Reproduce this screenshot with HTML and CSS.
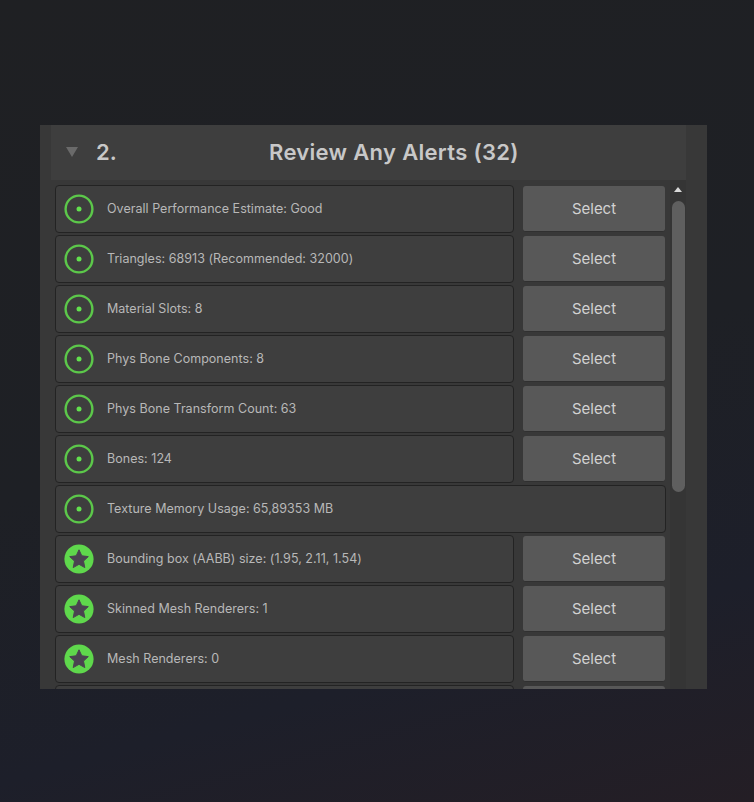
FILE: index.html
```html
<!DOCTYPE html>
<html lang="en">
<head>
  <meta charset="UTF-8" />
  <title>Review Any Alerts</title>
  <link rel="stylesheet" href="styles.css">
</head>
<body>
  <svg class="defs" width="0" height="0">
    <symbol id="icon-good" viewBox="0 0 30 30">
      <circle cx="15" cy="15" r="13.4" fill="none" stroke="#5cc84a" stroke-width="2.4"/>
      <circle cx="15" cy="15" r="2.5" fill="#62e24e"/>
    </symbol>
    <symbol id="icon-star" viewBox="0 0 30 30">
      <circle cx="15" cy="15" r="14.6" fill="#5fd84c"/>
      <path d="M15 5.8l2.8 6 6.5.8-4.8 4.5 1.3 6.5-5.8-3.3-5.8 3.3 1.3-6.5-4.8-4.5 6.5-.8z" fill="#4a4450" stroke="#4a4450" stroke-width="1" stroke-linejoin="round"/>
    </symbol>
  </svg>

  <section class="panel">
    <div class="header">
      <span class="arrow"></span>
      <span class="num">2.</span>
      <h1>Review Any Alerts (32)</h1>
    </div>
    <div class="body">
      <div class="list">
        <div class="row">
          <div class="info"><svg class="icon"><use href="#icon-good"/></svg><span>Overall Performance Estimate: Good</span></div>
          <button class="select-btn">Select</button>
        </div>
        <div class="row">
          <div class="info"><svg class="icon"><use href="#icon-good"/></svg><span>Triangles: 68913 (Recommended: 32000)</span></div>
          <button class="select-btn">Select</button>
        </div>
        <div class="row">
          <div class="info"><svg class="icon"><use href="#icon-good"/></svg><span>Material Slots: 8</span></div>
          <button class="select-btn">Select</button>
        </div>
        <div class="row">
          <div class="info"><svg class="icon"><use href="#icon-good"/></svg><span>Phys Bone Components: 8</span></div>
          <button class="select-btn">Select</button>
        </div>
        <div class="row">
          <div class="info"><svg class="icon"><use href="#icon-good"/></svg><span>Phys Bone Transform Count: 63</span></div>
          <button class="select-btn">Select</button>
        </div>
        <div class="row">
          <div class="info"><svg class="icon"><use href="#icon-good"/></svg><span>Bones: 124</span></div>
          <button class="select-btn">Select</button>
        </div>
        <div class="row">
          <div class="info"><svg class="icon"><use href="#icon-good"/></svg><span>Texture Memory Usage: 65,89353 MB</span></div>
        </div>
        <div class="row">
          <div class="info"><svg class="icon"><use href="#icon-star"/></svg><span>Bounding box (AABB) size: (1.95, 2.11, 1.54)</span></div>
          <button class="select-btn">Select</button>
        </div>
        <div class="row">
          <div class="info"><svg class="icon"><use href="#icon-star"/></svg><span>Skinned Mesh Renderers: 1</span></div>
          <button class="select-btn">Select</button>
        </div>
        <div class="row">
          <div class="info"><svg class="icon"><use href="#icon-star"/></svg><span>Mesh Renderers: 0</span></div>
          <button class="select-btn">Select</button>
        </div>
        <div class="row">
          <div class="info"></div>
          <button class="select-btn"></button>
        </div>
      </div>
      <div class="scrollbar">
        <span class="scroll-up"></span>
        <div class="thumb"></div>
      </div>
    </div>
  </section>
</body>
</html>
```

FILE: styles.css
```css
* {
  box-sizing: border-box;
  margin: 0;
  padding: 0;
}

body {
  width: 754px;
  height: 802px;
  overflow: hidden;
  padding: 125px 47px 0 40px;
  font-family: 'Inter', sans-serif;
  background: linear-gradient(165deg, #1f2023 0%, #1e2025 50%, #1d1f2a 78%, #241e25 100%);
}

.defs {
  position: absolute;
}

.panel {
  height: 564px;
  padding: 0 21px 0 11px;
  background: #383838;
  overflow: hidden;
}

.header {
  height: 55px;
  padding-bottom: 2px;
  display: flex;
  align-items: center;
  position: relative;
  background: #3e3e3e;
  color: #c8c8c8;
}

.arrow {
  margin-left: 15px;
  width: 0;
  height: 0;
  border-left: 6px solid transparent;
  border-right: 6px solid transparent;
  border-top: 10px solid #6a6a6a;
}

.num {
  margin-left: 18px;
  font-size: 22px;
  font-weight: 600;
}

.header h1 {
  position: absolute;
  left: 218px;
  font-size: 22px;
  font-weight: 600;
  letter-spacing: 0.32px;
  white-space: nowrap;
}

.body {
  display: flex;
  height: 509px;
}

.list {
  width: 619px;
  padding: 5px 4px 0 4px;
  display: flex;
  flex-direction: column;
  gap: 2px;
}

.row {
  flex: none;
  height: 48px;
  display: flex;
  align-items: center;
  gap: 9px;
}

.info {
  flex: 1;
  height: 48px;
  display: flex;
  align-items: center;
  padding: 0 0 2px 8px;
  background: #3e3e3e;
  border: 1px solid #232323;
  border-radius: 4px;
  color: #b8b8b8;
  font-size: 12.5px;
  letter-spacing: 0.03px;
}

.icon {
  width: 30px;
  height: 30px;
  margin: 2px 13px 0 0;
  flex: none;
}

.select-btn {
  width: 142px;
  height: 46px;
  margin-right: 1px;
  flex: none;
  background: #585858;
  border: none;
  border-bottom: 1px solid #303030;
  border-radius: 3px;
  color: #d2d2d2;
  font-family: inherit;
  font-size: 15px;
}

.scrollbar {
  width: 16px;
  background: #353535;
  position: relative;
  display: flex;
  flex-direction: column;
  align-items: center;
}

.scroll-up {
  margin-top: 7px;
  width: 0;
  height: 0;
  border-left: 4.5px solid transparent;
  border-right: 4.5px solid transparent;
  border-bottom: 5px solid #d8d8d8;
}

.thumb {
  margin-top: 9px;
  width: 13px;
  height: 291px;
  background: #5f5f5f;
  border-radius: 7px;
}
```
